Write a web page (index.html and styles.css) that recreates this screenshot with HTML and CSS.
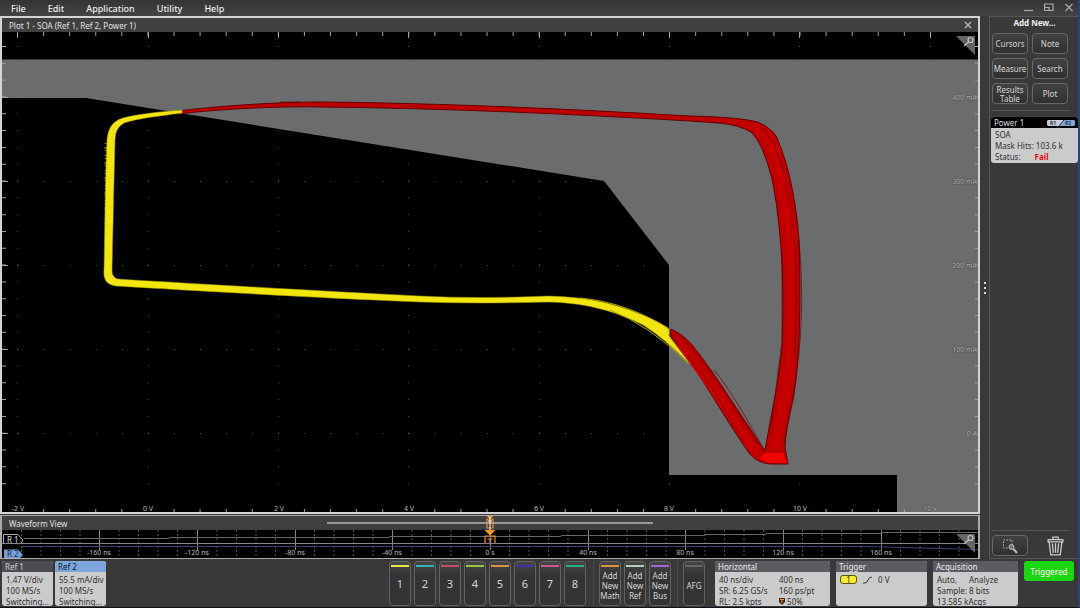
FILE: index.html
```html
<!DOCTYPE html>
<html lang="en">
<head>
<meta charset="utf-8">
<title>Oscilloscope - SOA plot</title>
<link rel="stylesheet" href="styles.css">
</head>
<body>
<header class="menubar">
  <nav class="menus">
    <button>File</button><button>Edit</button><button>Application</button><button>Utility</button><button>Help</button>
  </nav>
  <div class="window-controls">
    <button aria-label="Minimize"><svg viewBox="0 0 10 10"><path d="M0 7.500H9"/></svg></button>
    <button aria-label="Restore"><svg viewBox="0 0 10 10"><path d="M.5 1H9V7.500H.5ZM.5 4.500H5V7.500"/></svg></button>
    <button aria-label="Close"><svg viewBox="0 0 10 10"><path d="M1.500 1 8.500 8M8.500 1 1.500 8"/></svg></button>
  </div>
</header>

<div class="workspace">
  <main class="views">
    <section class="plot">
      <div class="view-title"><h2>Plot 1 - SOA (Ref 1, Ref 2, Power 1)</h2>
        <button class="close" aria-label="Close plot"><svg viewBox="0 0 8 8"><path d="M1 1 7 7M7 1 1 7"/></svg></button>
      </div>
      <svg class="plot-canvas" viewBox="2 32 976 480" role="img" aria-label="Safe operating area plot">
        <path class="mask" d="M2 59.500H978V513H897V475H669V265L604 181 86 98H2Z"/>
        <g class="dots">
          <path pathLength="910" d="M17.500 97.500H930"/><path pathLength="910" d="M17.500 181.500H930"/><path pathLength="910" d="M17.500 265.500H930"/><path pathLength="910" d="M17.500 349.500H930"/><path pathLength="910" d="M17.500 433.500H930"/>
        </g>
        <g class="dots vertical">
          <path pathLength="459" d="M17.500 46V500"/><path pathLength="459" d="M148.500 46V500"/><path pathLength="459" d="M278.500 46V500"/><path pathLength="459" d="M408.500 46V500"/><path pathLength="459" d="M539.500 46V500"/><path pathLength="459" d="M669.500 46V500"/><path pathLength="459" d="M799.500 46V500"/><path pathLength="459" d="M930.500 46V500"/>
        </g>
        <g class="ticks">
          <path class="tick-x" pathLength="936" d="M17 34H956"/>
          <path class="tick-x minor-only" pathLength="936" d="M17 511H956"/>
          <path class="tick-y" pathLength="459" d="M4 46V500"/>
          <path class="tick-y" pathLength="459" d="M977 46V500"/>
          <path class="tick-major" d="M17.500 32v6M148.500 32v6M278.500 32v6M408.500 32v6M539.500 32v6M669.500 32v6M799.500 32v6M930.500 32v6M2 97.500h6M2 181.500h6M2 265.500h6M2 349.500h6M2 433.500h6"/>
        </g>
        <g class="axis-y">
          <text x="977" y="100">400 mA</text><text x="977" y="184">300 mA</text><text x="977" y="268">200 mA</text><text x="977" y="352">100 mA</text><text x="977" y="436">0 A</text>
        </g>
        <g class="axis-x">
          <text x="18" y="511">-2 V</text><text x="148" y="511">0 V</text><text x="279" y="511">2 V</text><text x="409" y="511">4 V</text><text x="539" y="511">6 V</text><text x="669" y="511">8 V</text><text x="800" y="511">10 V</text>
          <text class="dim" x="930" y="511">12 V</text>
        </g>
        <path class="trace-hit" d="M178 111C210 107 270 102 320 102C440 103 570 109 690 116Q738 117 758 122Q776 130 779 143C791 172 799 218 799.500 255C801 320 799 365 793 400Q785 430 785 448L788 464L770 464Q757 463 749 453C728 423 710 391 693 366L670 336L671 329Q684 335 692 345C713 370 739 413 765 451C769 425 780 376 782 345C785 275 780 218 772 179Q763 143 751 132C733 122 715 123 690 121C570 114 440 108 320 107C270 106 210 110 178 114Z"/>
        <path class="hit-core" d="M755 127C777 141 786 184 790 239C795 315 790 372 784 401Q777 426 775 450M678 343C702 370 735 426 758 454"/>
        <path class="hit-streak" d="M759 126Q778 141 786 184C797 236 798 295 794 355M674 331Q696 350 718 384L758 444M671 334 705 377 745 442M798 230C804 290 803 340 792 403L784 446M782 250V341L771 429M714 370Q736 397 765 452M280 102h20"/>
        <path class="hit-end" d="M765 453H784L785 459 788 463 768 463Q762 460 760 458Z"/>
        <path class="noise" d="M106 143V276"/>
        <path class="trace-ok" d="M182 110C158 112 138 114 123 118C112 121 108 129 107 140C105 180 105 230 104 270C103 280 107 285 116 286C200 291 320 298 420 302Q480 304 548 302C590 303 619 313 643 325Q664 338 690 364L669 336V329C659 322 650 318 640 314C610 302 585 297 548 296Q480 299 420 296C320 291 200 284 118 279Q112 278 112 270C113 230 114 180 115 140Q115 128 124 123C140 118 160 116 182 113Z"/>
        <path class="stray-ok" d="M580 298C614 301 643 313 668 328M610 310Q649 325 688 363"/>
        <path class="corner" d="M956 36H975V55Z"/>
        <g class="lens"><circle cx="970.500" cy="40" r="2.500"/><path d="M968.500 42 964 46"/></g>
      </svg>
    </section>

    <section class="wave">
      <div class="view-title wave-title"><h2>Waveform View</h2>
        <svg class="overview" viewBox="2 516 976 14" aria-hidden="true">
          <path class="range" d="M327 523H653"/>
          <path class="marker-fill" d="M486.500 516h7l-3.500 3z"/>
          <path class="marker-box" d="M487 519H493V528H487Z"/><path class="marker-white" d="M490 517V530M488 521h4"/>
        </svg>
      </div>
      <svg class="wave-canvas" viewBox="2 530 976 28" role="img" aria-label="Waveform overview">
        <path class="minor" d="M21.500 530v28M41 530v28M60.500 530v28M80 530v28M119 530v28M138.500 530v28M158 530v28M177.500 530v28M217 530v28M236.500 530v28M256 530v28M275.500 530v28M314.500 530v28M334 530v28M353.500 530v28M373 530v28M412 530v28M431.500 530v28M451 530v28M470.500 530v28M509.500 530v28M529 530v28M548.500 530v28M568 530v28M607.500 530v28M627 530v28M646.500 530v28M666 530v28M705 530v28M724.500 530v28M744 530v28M763.500 530v28M802.500 530v28M822 530v28M841.500 530v28M861 530v28M900.500 530v28M920 530v28M939.500 530v28M959 530v28"/>
        <path class="major" d="M99.500 530v20M197.500 530v20M295.500 530v20M392.500 530v20M490.500 530v20M588.500 530v20M685.500 530v20M783.500 530v20M881.500 530v20"/>
        <path class="ref-one" d="M24 538.500H168L170 537.500H388L390 536.500H560L562 535.500H704L706 534.500H765L767 533.500H880L882 532.500H978"/>
        <path class="divider" d="M2 543.500H978"/>
        <path class="ref-two" d="M22 546.500H866L978 549.500"/>
        <g class="axis-x">
          <text x="99" y="555">-160 ns</text><text x="197" y="555">-120 ns</text><text x="295" y="555">-80 ns</text><text x="392" y="555">-40 ns</text><text x="490" y="555">0 s</text><text x="588" y="555">40 ns</text><text x="685" y="555">80 ns</text><text x="783" y="555">120 ns</text><text x="881" y="555">160 ns</text>
        </g>
        <path class="flag-one" d="M3.500 543V534.500H18L23 540 21 543"/>
        <text class="flag-text" x="7" y="543">R 1</text>
        <path class="flag-two" d="M4 558V549.500H18L23 555 20 558Z"/>
        <text class="flag-text dark" x="7" y="557">R 2</text>
        <path class="marker-fill" d="M484.500 530H495.500L490 535.500Z"/>
        <path class="marker-box" d="M485 543V536H495V543M487.500 539H492.500M490 539V543"/>
        <path class="corner" d="M956 534H975V553Z"/>
        <g class="lens"><circle cx="970.500" cy="538" r="2.500"/><path d="M968.500 540 964 544"/></g>
      </svg>
    </section>
  </main>

  <button class="handle" aria-label="Resize results bar"><i></i><i></i><i></i></button>

  <aside class="sidebar">
    <h2>Add New...</h2>
    <div class="add-grid">
      <button>Cursors</button><button>Note</button>
      <button>Measure</button><button>Search</button>
      <button>Results<br>Table</button><button>Plot</button>
    </div>
    <section class="badge power">
      <h3>Power 1
        <svg viewBox="0 0 28 6" role="img" aria-label="Sources R1, R2"><path fill="#c8ccd2" d="M1 0H17L12 6H1L0 5V1Z"/><path fill="#82a9dc" d="M17 0H27L28 1V5L27 6H12Z"/><path stroke="#26354c" d="M17 0 12 6"/><text x="3" y="5">R1</text><text x="18" y="5">R2</text></svg>
      </h3>
      <div class="badge-body"><p>SOA</p><p>Mask Hits: 103.6 k</p><p class="status"><span>Status:</span><b>Fail</b></p></div>
    </section>
    <div class="tools">
      <button class="zoom-tool" aria-label="Zoom area"><svg viewBox="0 0 16 16"><path stroke-dasharray="1.500 1.500" d="M1.500 2H10V10H1.500Z"/><circle cx="9.500" cy="9" r="2.500" fill="#777"/><path stroke-width="2" d="M11.500 11 15 15"/></svg></button>
      <button class="trash" aria-label="Delete"><svg viewBox="0 0 16 19"><path d="M1 3.500H15V5.500H1ZM5.500 3V1H10.500V3M2 6 3.500 18H12.500L14 6M5 7 6 16M8 7V16M11 7 10 16"/></svg></button>
    </div>
  </aside>
</div>

<footer class="settings">
  <section class="badge ref"><h3>Ref 1</h3><div class="badge-body"><p>1.47 V/div</p><p>100 MS/s</p><p>Switching...</p></div></section>
  <section class="badge ref ref-blue"><h3>Ref 2</h3><div class="badge-body"><p>55.5 mA/div</p><p>100 MS/s</p><p>Switching...</p></div></section>
  <div class="channels">
    <button class="c1">1</button><button class="c2">2</button><button class="c3">3</button><button class="c4">4</button><button class="c5">5</button><button class="c6">6</button><button class="c7">7</button><button class="c8">8</button>
  </div>
  <div class="channels adders">
    <button class="c5">Add<br>New<br>Math</button><button class="pale">Add<br>New<br>Ref</button><button class="violet">Add<br>New<br>Bus</button>
  </div>
  <div class="channels afg"><button>AFG</button></div>
  <section class="badge horizontal"><h3>Horizontal</h3>
    <div class="badge-body two"><p>40 ns/div</p><p>400 ns</p><p>SR: 6.25 GS/s</p><p>160 ps/pt</p><p>RL: 2.5 kpts</p><p><svg class="pos" viewBox="0 0 6 7"><path fill="#3a2418" d="M0 0H6V4L3 7 0 4Z"/><path stroke="#f39a3a" d="M1 1.500H5M3 1.500V5"/></svg> 50%</p></div>
  </section>
  <section class="badge trigger"><h3>Trigger</h3>
    <div class="badge-body source"><span class="chip">1</span><svg viewBox="0 0 9 8"><path d="M0 7H2Q4 7 5 4 6 1 9 1"/></svg><span>0 V</span></div>
  </section>
  <section class="badge acquisition"><h3>Acquisition</h3>
    <div class="badge-body"><p class="modes"><span>Auto,</span><span>Analyze</span></p><p>Sample: 8 bits</p><p>13.585 kAcqs</p></div>
  </section>
  <button class="triggered">Triggered</button>
</footer>
</body>
</html>
```
FILE: styles.css
```css
* { box-sizing: border-box; }
body {
  margin: 0;
  height: 100vh;
  display: flex;
  flex-direction: column;
  overflow: hidden;
  background: #393939;
  color: #d6d6d6;
  font: 8px/11px "Noto Sans", "Open Sans", sans-serif;
  border-right: 2px solid #28486b;
  border-bottom: 1px solid #10131b;
}
h2, h3, p { margin: 0; font-weight: 400; }
button {
  font: inherit;
  color: inherit;
  background: none;
  border: 0;
  padding: 0;
}
svg { display: block; fill: none; }

.menubar {
  flex: none;
  height: 16px;
  display: flex;
  justify-content: space-between;
  align-items: center;
  background: linear-gradient(#343434, #444);
  padding: 0 4px 0 11px;
}
.menus { display: flex; gap: 22px; font-size: 9px; font-weight: 500; color: #eee; }
.window-controls { display: flex; gap: 10px; }
.window-controls svg { width: 10px; height: 10px; stroke: #aaa; stroke-width: 1.2; }

.workspace { flex: 1; min-height: 0; display: flex; }
.views { flex: 1; min-width: 0; display: flex; flex-direction: column; gap: 1px; }
.plot {
  flex: 1;
  min-height: 0;
  display: flex;
  flex-direction: column;
  border: 2px solid #d4d4d4;
}
.view-title {
  flex: none;
  height: 14px;
  display: flex;
  justify-content: space-between;
  align-items: center;
  padding: 0 6px 0 7px;
  background: #3f403f;
  color: #e0e0e0;
}
.view-title h2 { font-size: 8px; }
.close svg { width: 8px; height: 8px; stroke: #bbb; stroke-width: 1.3; }
.plot-canvas { flex: 1; min-height: 0; width: 100%; background: #000; }

.mask { fill: #6b6c6e; }
.dots { stroke: #858585; stroke-opacity: .65; stroke-dasharray: 1 25; }
.dots.vertical { stroke-dasharray: 1 16; }
.ticks { stroke: #a0a0a0; }
.tick-x { stroke-width: 4; stroke-dasharray: 1 25; }
.tick-x.minor-only { stroke-dasharray: 0 26 1 25 1 25 1 25 1 25; }
.tick-y { stroke-width: 4; stroke-dasharray: 1 16; }
.axis-x text, .axis-y text { font-size: 7px; fill: #bbb; text-anchor: middle; }
.axis-y text { text-anchor: end; fill: #b0b0b0; stroke: #505153; stroke-width: 1px; paint-order: stroke; }
.axis-x .dim { fill: #aaa; stroke: #505153; stroke-width: 1px; paint-order: stroke; }
.trace-ok { fill: #f2e60c; stroke: #9b9100; stroke-width: .5; }
.noise { stroke: #eee209; stroke-width: 3; stroke-dasharray: 1 3 2 1 1 4 1 2; stroke-opacity: .5; }
.stray-ok { stroke: #b5aa00; stroke-width: 1; }
.trace-hit { fill: #bd0000; stroke: #670000; stroke-width: 1; }
.hit-core { stroke: #c80000; stroke-width: 7; }
.hit-streak { stroke: #710404; stroke-width: .7; }
.hit-end { fill: #f40505; }
.corner { fill: #656565; }
.lens { stroke: #c4c4c4; stroke-width: 1.2; }

.wave {
  flex: none;
  display: flex;
  flex-direction: column;
  border: solid #aaa;
  border-width: 1px 2px 1px;
}
.wave-title { position: relative; }
.overview { position: absolute; inset: 0; width: 100%; height: 100%; }
.wave-canvas { width: 100%; height: 28px; background: #000; }
.range { stroke: #999; stroke-width: 2; }
.marker-fill { fill: #f39a2b; }
.marker-box { stroke: #ee9131; stroke-width: 1.2; }
.marker-white { stroke: #fff; }
.minor { stroke: #555; stroke-dasharray: 2 2; }
.major, .divider { stroke: #858585; }
.ref-one { stroke: #686868; }
.ref-two { stroke: #3c4378; stroke-width: 1; }
.flag-one { stroke: #aaa; fill: #000; }
.flag-two { fill: #789fd3; }
.flag-text { font-size: 8px; fill: #ddd; }
.flag-text.dark { fill: #132848; }

.handle {
  flex: none;
  width: 9px;
  display: flex;
  flex-direction: column;
  align-items: center;
  justify-content: center;
  gap: 3px;
}
.handle i { width: 2px; height: 2px; background: #ddd; }
.sidebar {
  flex: none;
  width: 89px;
  display: flex;
  flex-direction: column;
  padding: 2px 0 2px 1px;
  border-left: 1px solid #555;
  border-top: 1px solid #555;
  border-bottom: 1px solid #555;
}
.sidebar h2 { font-size: 8px; font-weight: 700; text-align: center; color: #eee; height: 14px; line-height: 8px; }
.add-grid {
  display: grid;
  grid-template-columns: 36px 36px;
  grid-auto-rows: 21px;
  gap: 4px;
  padding: 0 0 6px 1px;
  margin-right: 8px;
  border-bottom: 1px solid #555;
}
.add-grid button, .zoom-tool {
  border: 1px solid #686868;
  border-radius: 4px;
  background: linear-gradient(#414141, #303030);
  line-height: 9px;
  white-space: nowrap;
  display: flex;
  align-items: center;
  justify-content: center;
}
.badge { border-radius: 3px; overflow: hidden; color: #303030; background: #cbcbcb; }
.badge h3 { font-size: 8px; line-height: 11px; height: 11px; padding: 0 3px; background: #5b5b62; color: #eee; }
.badge-body { padding: 2px 3px 0 4px; white-space: nowrap; }
.power { height: 46px; margin-top: 6px; }
.power h3 { display: flex; align-items: center; justify-content: space-between; background: #000; color: #ddd; }
.power .badge-body { padding-top: 1px; }
.power h3 svg { width: 28px; height: 6px; }
.power h3 text { font-size: 5px; font-weight: 700; fill: #26354c; }
.status { display: flex; gap: 14px; }
.status b { color: #e40d16; }
.tools {
  margin: auto 8px 0 0;
  padding: 4px 1px 0;
  border-top: 1px solid #555;
  display: flex;
  justify-content: space-between;
  align-items: center;
}
.zoom-tool { width: 36px; height: 21px; }
.zoom-tool svg { width: 16px; height: 16px; stroke: #bbb; }
.trash { margin-right: 5px; }
.trash svg { width: 17px; height: 20px; stroke: #ccc; stroke-width: 1.2; }

.settings {
  flex: none;
  height: 48px;
  display: flex;
  padding: 2px 4px 1px 2px;
}
.ref { width: 51px; margin-right: 2px; }
.ref h3 { background: #4d4c53; color: #ccc; }
.ref-blue h3 { background: #7ca6dc; color: #101c30; }
.channels { display: flex; gap: 3px; margin-left: auto; }
.channels button {
  width: 22px;
  border: 1px solid #626262;
  border-radius: 4px;
  position: relative;
  font-size: 11px;
  background: linear-gradient(#464646, #343434 30%);
}
.channels button::before {
  content: "";
  position: absolute;
  top: 3px;
  left: 1px;
  right: 1px;
  height: 2px;
  background: var(--line, #666);
}
.adders, .afg { margin-left: 6px; padding-left: 5px; border-left: 1px solid #4c4c4c; }
.adders { margin-left: 7px; }
.adders button, .afg button { font-size: 8px; line-height: 10px; padding-top: 4px; }
.c1 { --line: #e9e84b; }
.c2 { --line: #38b3b9; }
.c3 { --line: #c84c64; }
.c4 { --line: #91c741; }
.c5 { --line: #dc9140; }
.c6 { --line: #3835a5; }
.c7 { --line: #cc5793; }
.c8 { --line: #24b284; }
.pale { --line: #b7cbb8; }
.violet { --line: #a368d5; }
.horizontal { width: 115px; margin-left: 10px; }
.two { display: grid; grid-template-columns: 1fr 48px; }
.pos { width: 6px; height: 7px; display: inline-block; }
.trigger { width: 91px; margin-left: 6px; }
.source { display: flex; align-items: center; gap: 6px; padding-top: 2px; }
.source svg { width: 9px; height: 8px; stroke: #333; }
.chip { width: 17px; height: 9px; line-height: 7px; text-align: center; background: #f7ed30; border: 1px solid #575300; border-radius: 3px; }
.acquisition { width: 85px; margin-left: 6px; }
.modes { display: flex; gap: 12px; }
.triggered { width: 50px; height: 20px; margin-left: 6px; border-radius: 3px; background: #1bd70f; color: #eee; font-weight: 500; }
```
